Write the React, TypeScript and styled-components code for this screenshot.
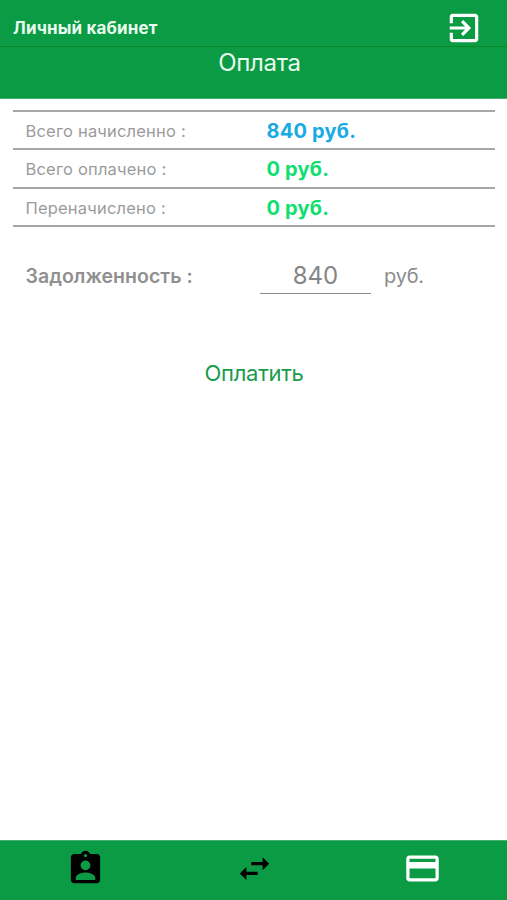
import React from "react";
import styled, { createGlobalStyle } from "styled-components";
import { MdAssignmentInd, MdCreditCard, MdExitToApp, MdSwapHoriz } from "react-icons/md";

const GlobalStyle = createGlobalStyle`
  * { box-sizing: border-box; }
  body { margin: 0; background: #fff; font-family: Inter, "Liberation Sans", sans-serif; }
`;

const Screen = styled.div`
  display: flex;
  flex-direction: column;
  height: 900px;
  background: #fff;
`;

const TopBar = styled.header`
  display: flex;
  align-items: flex-start;
  justify-content: space-between;
  height: 47px;
  padding: 0 24px 0 13px;
  background: #0b9b45;
  border-bottom: 1px solid #078b24;
  color: #fff;
`;

const AppTitle = styled.div`
  padding-top: 17px;
  font-size: 17px;
  font-weight: 700;
  letter-spacing: 0.15px;
  line-height: 22px;
  color: #e9faee;
`;

const IconButton = styled.button`
  display: flex;
  padding: 0;
  border: 0;
  background: none;
  color: inherit;
  margin-top: 9px;
`;

const Heading = styled.h1`
  height: 52px;
  margin: 0;
  padding-top: 1px;
  padding-left: 12px;
  border-bottom: 1px solid #43b070;
  background: #0b9b45;
  color: #e9faee;
  font-size: 24px;
  font-weight: 400;
  letter-spacing: -0.35px;
  line-height: 30px;
  text-align: center;
`;

const Content = styled.main`
  flex: 1;
  padding: 11px 12px 0 13px;
`;

const Summary = styled.div`
  border-top: 2px solid #a6a6a6;
`;

const Row = styled.div`
  display: grid;
  grid-template-columns: 241px 1fr;
  align-items: center;
  height: 38.4px;
  padding: 1.2px 0 0 12.5px;
  border-bottom: 2px solid #a6a6a6;
`;

const Label = styled.span`
  font-size: 16.5px;
  letter-spacing: 0.19px;
  color: #9b9b9b;
`;

const Amount = styled.span<{ $color: string }>`
  font-size: 20px;
  font-weight: 700;
  letter-spacing: 0.2px;
  color: ${(p) => p.$color};
`;

const Debt = styled.div`
  display: flex;
  align-items: flex-start;
  margin-top: 30px;
  padding-left: 12.5px;
  color: #8c8c8c;
`;

const DebtLabel = styled.span`
  width: 234.5px;
  padding-top: 6px;
  font-size: 19.5px;
  font-weight: 600;
  letter-spacing: 0.02px;
  line-height: 26px;
  color: #909090;
`;

const DebtInput = styled.input`
  width: 111px;
  height: 37px;
  padding: 1px 0 0;
  border: 0;
  border-bottom: 1px solid #8c8c8c;
  outline: 0;
  background: none;
  color: #858585;
  font: 400 24px Inter, sans-serif;
  text-align: center;
`;

const Unit = styled.span`
  margin-left: 13px;
  padding-top: 6px;
  font-size: 20px;
  letter-spacing: -0.2px;
  line-height: 26px;
`;

const PayButton = styled.button`
  display: block;
  margin: 64px auto 0;
  padding: 0;
  border: 0;
  background: none;
  color: #189b4c;
  font: 400 22px/30px Inter, sans-serif;
  letter-spacing: -0.3px;
`;

const TabBar = styled.nav`
  display: grid;
  grid-template-columns: repeat(3, 1fr);
  height: 60px;
  border-top: 1px solid #43b070;
  background: #0b9b45;
`;

const Tab = styled.a<{ $active?: boolean }>`
  display: flex;
  justify-content: center;
  padding: 8px 0 0 ${(p) => (p.$active ? "0" : "1px")};
  color: ${(p) => (p.$active ? "#fff" : "#000")};
`;

const rows = [
  { label: "Всего начисленно :", value: "840 руб.", color: "#17aae5" },
  { label: "Всего оплачено :", value: "0 руб.", color: "#0de070" },
  { label: "Переначислено :", value: "0 руб.", color: "#0de070" },
];

export default function App() {
  return (
    <Screen>
      <GlobalStyle />
      <TopBar>
        <AppTitle>Личный кабинет</AppTitle>
        <IconButton aria-label="Выход">
          <MdExitToApp size={38} />
        </IconButton>
      </TopBar>
      <Heading>Оплата</Heading>
      <Content>
        <Summary>
          {rows.map((row) => (
            <Row key={row.label}>
              <Label>{row.label}</Label>
              <Amount $color={row.color}>{row.value}</Amount>
            </Row>
          ))}
        </Summary>
        <Debt>
          <DebtLabel>Задолженность :</DebtLabel>
          <DebtInput defaultValue="840" />
          <Unit>руб.</Unit>
        </Debt>
        <PayButton>Оплатить</PayButton>
      </Content>
      <TabBar>
        <Tab>
          <MdAssignmentInd size={39} />
        </Tab>
        <Tab>
          <MdSwapHoriz size={39} />
        </Tab>
        <Tab $active>
          <MdCreditCard size={39} />
        </Tab>
      </TabBar>
    </Screen>
  );
}
